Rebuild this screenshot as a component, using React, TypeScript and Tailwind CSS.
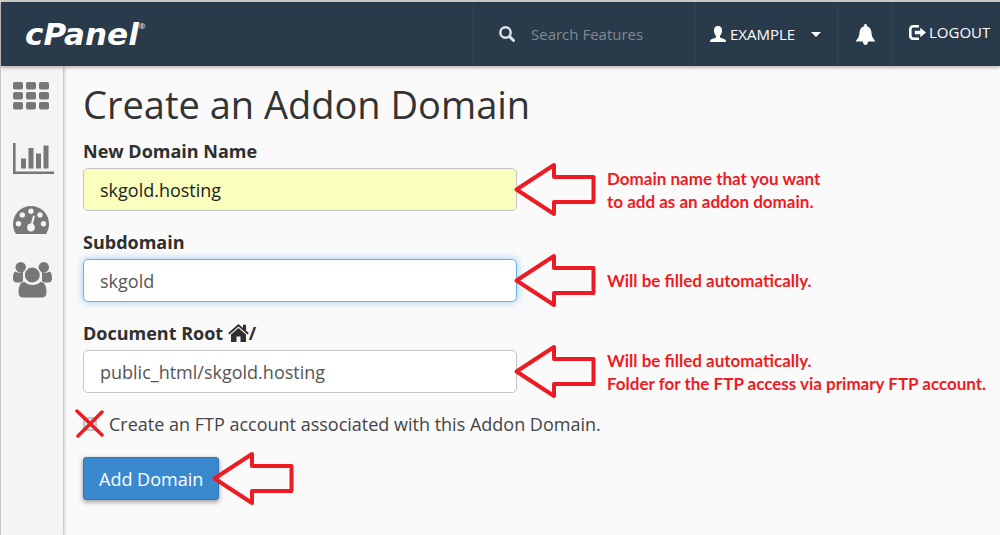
import type { ReactNode } from "react";

/* ---------- Icons ---------- */

function GridIcon() {
  return (
    <svg width="36" height="28" viewBox="0 0 36 28" fill="currentColor" aria-hidden="true">
      {[0, 10, 20].map((y) =>
        [0, 13, 26].map((x) => <rect key={`${x}-${y}`} x={x} y={y} width="10" height="7.6" rx="1.8" />)
      )}
    </svg>
  );
}

function ChartIcon() {
  return (
    <svg width="41" height="31" viewBox="0 0 41 31" fill="currentColor" aria-hidden="true">
      <path d="M0 0h2.6v28.5H41V31H0z" />
      <path d="M8 15.5h5v10H8zM15.5 5h5v20.5h-5zM23 10.500h5v15h-5zM30.500 2.500h5v23h-5z" />
    </svg>
  );
}

function GaugeIcon() {
  return (
    <svg width="36" height="28" viewBox="0 0 36 28" fill="currentColor" aria-hidden="true">
      <path d="M18 0C8 0 0 8 0 18c0 3.500 1 6.700 2.700 9.400.3.400.6.600 1.100.6h28.400c.5 0 .8-.2 1.100-.6C35 24.700 36 21.500 36 18 36 8 28 0 18 0z" />
      <g fill="#f4f4f4">
        <circle cx="5.500" cy="17.800" r="2.700" />
        <circle cx="9.300" cy="8.900" r="2.700" />
        <circle cx="18" cy="5.200" r="2.700" />
        <circle cx="27" cy="8.900" r="2.700" />
        <circle cx="30.500" cy="17.800" r="2.700" />
        <circle cx="18" cy="21.500" r="3.900" />
      </g>
      <path d="M18.200 20.500L20.800 10.500" stroke="#f4f4f4" strokeWidth="2" strokeLinecap="round" />
    </svg>
  );
}

function UsersIcon() {
  return (
    <svg className="shrink-0" width="39" height="36" viewBox="0 0 39 36" fill="currentColor" aria-hidden="true">
      <circle cx="7.700" cy="5.200" r="5.200" />
      <circle cx="30.800" cy="5.200" r="5.200" />
      <path d="M2.500 9.500C.8 9.800 0 13 0 16.500c0 2.500 1.300 4 3.600 4H10V9.500c-3 2-5 1.500-7.500 0zM36.500 9.500c1.700.3 2.500 3.500 2.500 7 0 2.500-1.300 4-3.600 4H29V9.500c3 2 5 1.500 7.500 0z" />
      <path
        d="M11.500 19.500c-4.500 0-6.500 5-6.500 11 0 3.500 2 5.500 5.300 5.500h18.400c3.300 0 5.300-2 5.300-5.500 0-6-2-11-6.500-11-4.500 4-11.500 4-16 0z"
        stroke="#f4f4f4"
        strokeWidth="1"
      />
      <circle cx="19.300" cy="13" r="8.200" stroke="#f4f4f4" strokeWidth="1.400" />
    </svg>
  );
}

function SearchIcon() {
  return (
    <svg width="16" height="16" viewBox="0 0 16 16" fill="none" stroke="currentColor" aria-hidden="true">
      <circle cx="6.500" cy="6.500" r="5.200" strokeWidth="2.400" />
      <path d="M10.500 10.500l4 4" strokeWidth="3" strokeLinecap="round" />
    </svg>
  );
}

function UserIcon() {
  return (
    <svg width="16" height="16" viewBox="0 0 16 16" fill="currentColor" aria-hidden="true">
      <path d="M8 0C5.500 0 4 1.500 4 4.300c0 2.500.8 4.400 2 5.700v1.300c-.4 1-4.700 1.500-5.600 2.700-.3.500-.4 1.200-.4 2h16c0-.8-.1-1.500-.4-2-.9-1.200-5.200-1.700-5.600-2.700V10c1.200-1.300 2-3.200 2-5.700C12 1.500 10.500 0 8 0z" />
    </svg>
  );
}

function BellIcon() {
  return (
    <svg width="19" height="21" viewBox="0 0 19 21" fill="currentColor" aria-hidden="true">
      <path d="M9.500 0c.8 0 1.400.6 1.400 1.400v.8c2.700.7 4.200 2.900 4.500 5.800.4 3.600.8 5.500 2.400 7.200.7.800 1.200 1.300 1.200 2.300h-7c0 2-1 3.500-2.500 3.500S7 19.500 7 17.500H0c0-1 .5-1.500 1.200-2.300C2.800 13.500 3.200 11.600 3.600 8c.3-2.900 1.800-5.100 4.500-5.800v-.8C8.100.6 8.700 0 9.500 0z" />
    </svg>
  );
}

function LogoutIcon() {
  return (
    <svg width="17" height="15" viewBox="0 0 17 15" aria-hidden="true">
      <path d="M10 1.300H4.500c-2 0-3.200 1.200-3.200 3.200v6c0 2 1.200 3.200 3.200 3.200H10" fill="none" stroke="currentColor" strokeWidth="2.600" />
      <path d="M11.300 2.700L17 7.500l-5.700 4.800V9.300H5.800V5.700h5.500z" fill="currentColor" />
    </svg>
  );
}

function HomeIcon() {
  return (
    <svg width="21" height="18" viewBox="0 0 21 18" aria-hidden="true">
      <path d="M.8 9.700L10.500 1.300l9.700 8.400" fill="none" stroke="currentColor" strokeWidth="1.800" />
      <path d="M15 .8h3v6.500l-3-2.700z" fill="currentColor" />
      <path d="M10.500 4L18 10.500V18h-5.500v-5.500h-4V18H3v-7.500z" fill="currentColor" />
    </svg>
  );
}

function RedArrow() {
  return (
    <svg className="shrink-0" width="84" height="55" viewBox="0 0 84 55" fill="none" stroke="#ed1c24" strokeWidth="4" aria-hidden="true">
      <path d="M3.500 27.500L41 3v12h39.500v25H41v12z" strokeLinejoin="round" />
    </svg>
  );
}

/* ---------- Form row ---------- */

interface FieldProps {
  id: string;
  label: ReactNode;
  value: string;
  inputClass: string;
  note: string[];
}

function Field({ id, label, value, inputClass, note }: FieldProps) {
  return (
    <div className="mb-5">
      <label htmlFor={id} className="mb-[6px] flex h-[22px] w-fit items-center text-lg font-bold text-[#2f2f2f]">
        {label}
      </label>
      <div className="flex h-[43px] items-center">
        <input
          id={id}
          type="text"
          defaultValue={value}
          className={`h-full w-[434px] min-w-0 rounded-[5px] border px-4 text-lg outline-none ${inputClass}`}
        />
        <div className="relative -ml-1 flex shrink-0 items-center gap-[10px]">
          <RedArrow />
          <p className="font-[Lato,sans-serif] text-[17px] leading-[23px] font-bold text-[#ed1c24]">
            {note.map((line) => (
              <span key={line} className="block">{line}</span>
            ))}
          </p>
        </div>
      </div>
    </div>
  );
}

const navItems = [
  { name: "Home", icon: <GridIcon />, box: "h-7" },
  { name: "Statistics", icon: <ChartIcon />, box: "h-8" },
  { name: "Dashboard", icon: <GaugeIcon />, box: "h-7" },
  { name: "User Manager", icon: <UsersIcon />, box: "h-7" },
];

export default function App() {
  return (
    <div className="flex min-h-screen flex-col border-t-2 border-l border-[#d2d4d1] bg-[#fafafa] font-['Open_Sans',sans-serif] text-[#333]">
      {/* Top bar */}
      <header className="relative z-10 flex h-16 items-stretch bg-[#293a4a] text-white shadow-[0_1px_4px_rgba(60,40,30,0.45)]">
        <a href="#" className="flex flex-1 items-center pl-6">
          <span className="font-['DejaVu_Sans',sans-serif] text-[31px] leading-none font-bold italic">cPanel</span>
          <sup className="-top-2 text-[8px]">®</sup>
        </a>
        <label className="flex w-[221px] items-center gap-4 border-l border-[#2f4353] pl-[25px] text-[#dfe4e8]">
          <SearchIcon />
          <input
            type="search"
            aria-label="Search Features"
            placeholder="Search Features"
            className="w-36 bg-transparent text-[15px] outline-none placeholder:text-[#808a92]"
          />
        </label>
        <button className="flex w-[143px] items-center gap-1 border-l-2 border-[#2f4353] pl-[14px] text-[15px]">
          <UserIcon />
          EXAMPLE
          <svg className="ml-3" width="10" height="5" viewBox="0 0 10 5" fill="currentColor" aria-hidden="true">
            <path d="M0 0h10L5 5z" />
          </svg>
        </button>
        <button aria-label="Notifications" className="flex w-[55px] items-center justify-center border-l border-[#2f4353]">
          <BellIcon />
        </button>
        <a href="#" className="flex w-[108px] items-center gap-[3px] border-l border-[#2f4353] pb-1 pl-4 text-[15px]">
          <LogoutIcon />
          LOGOUT
        </a>
      </header>

      <div className="flex flex-1">
        {/* Side menu */}
        <nav className="flex w-[62px] shrink-0 flex-col gap-8 bg-[#f4f4f4] pt-4 pl-3 text-[#777] shadow-[1px_0_3px_rgba(0,0,0,0.3)]">
          {navItems.map((item) => (
            <a key={item.name} href="#" aria-label={item.name} className={`flex items-center ${item.box}`}>
              {item.icon}
            </a>
          ))}
        </nav>

        {/* Form */}
        <main className="min-w-0 flex-1 pt-4 pl-5">
          <h1 className="mb-[14px] text-[38px] leading-[44px] font-normal">Create an Addon Domain</h1>
          <form>
            <Field
              id="domain"
              label="New Domain Name"
              value="skgold.hosting"
              inputClass="border-[#c4c4c4] bg-[#faffbd] text-[#222]"
              note={["Domain name that you want", "to add as an addon domain."]}
            />
            <Field
              id="subdomain"
              label="Subdomain"
              value="skgold"
              inputClass="border-[#66afe9] bg-white text-[#555] shadow-[0_0_8px_rgba(102,175,233,0.6)]"
              note={["Will be filled automatically."]}
            />
            <Field
              id="docroot"
              label={<>Document Root&nbsp;<HomeIcon />/</>}
              value="public_html/skgold.hosting"
              inputClass="border-[#c4c4c4] bg-white text-[#555]"
              note={["Will be filled automatically.", "Folder for the FTP access via primary FTP account."]}
            />

            <div className="mb-[22px] flex h-[22px] items-center">
              <div className="relative mr-3 h-[14px] w-[14px]">
                <input
                  id="ftp"
                  type="checkbox"
                  className="block h-full w-full appearance-none border-2 border-[#c4c4c4] bg-[#eee]"
                />
                <svg
                  className="pointer-events-none absolute -top-2 -left-2"
                  width="29" height="29" viewBox="0 0 29 29"
                  stroke="#ed1c24" strokeWidth="3.500" strokeLinecap="round" aria-hidden="true"
                >
                  <path d="M2 2l25 24M27 3L3 27" />
                </svg>
              </div>
              <label htmlFor="ftp" className="text-lg text-[#444]">
                Create an FTP account associated with this Addon Domain.
              </label>
            </div>

            <div className="flex h-[43px] items-center">
              <button
                type="button"
                className="h-full rounded-[3px] border border-[#2e76b8] bg-[#3a89cf] px-[15px] text-lg text-white shadow-[0_2px_5px_rgba(0,0,0,0.4)]"
              >
                Add Domain
              </button>
              <div className="relative -ml-2">
                <RedArrow />
              </div>
            </div>
          </form>
        </main>
      </div>
    </div>
  );
}
